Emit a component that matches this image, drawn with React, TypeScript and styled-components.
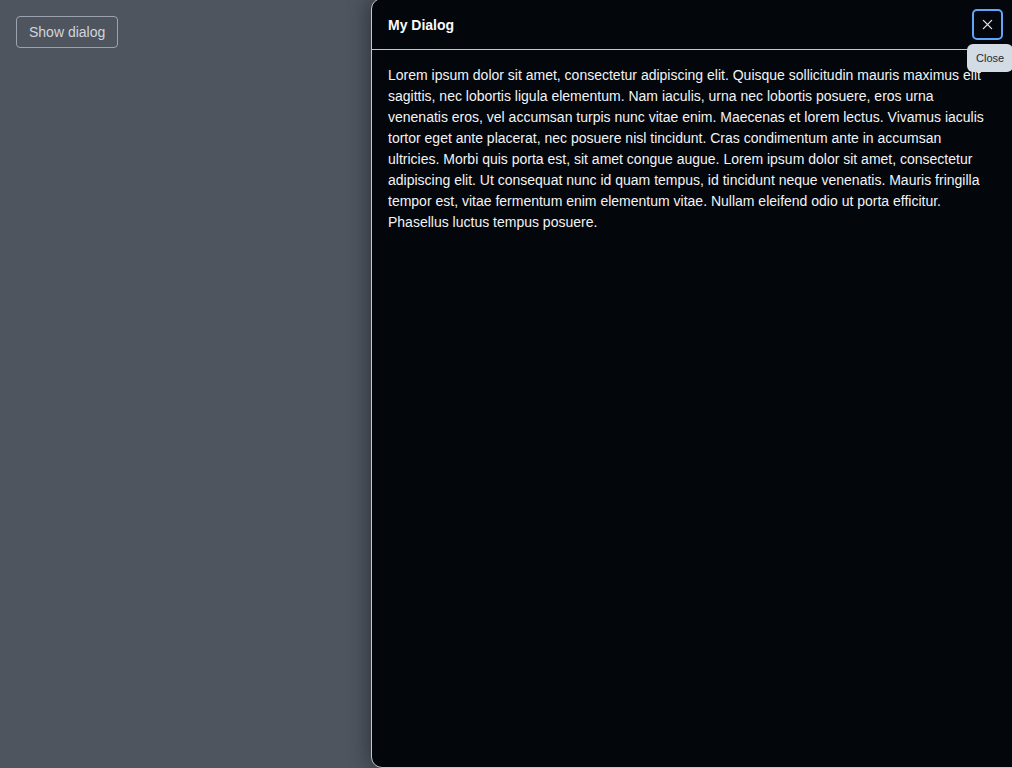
import React from "react";
import styled, { createGlobalStyle } from "styled-components";

const Global = createGlobalStyle`
  html, body { margin: 0; padding: 0; }
  body {
    background: #4e555f;
    font-family: "Liberation Sans", Arial, sans-serif;
    width: 1012px;
    height: 768px;
    overflow: hidden;
  }
`;

const Page = styled.div`
  position: relative;
  width: 1012px;
  height: 768px;
  padding: 16px;
  box-sizing: border-box;
  overflow: hidden;
`;

const ShowButton = styled.button`
  font-family: "Liberation Sans", Arial, sans-serif;
  font-size: 14px;
  color: #d1d5db;
  background: transparent;
  border: 1px solid #9ca3af;
  border-radius: 4px;
  height: 32px;
  padding: 0 12px;
  cursor: pointer;
`;

const Dialog = styled.div`
  position: absolute;
  top: -2px;
  left: 371px;
  width: 660px;
  height: 770px;
  box-sizing: border-box;
  background: #03060b;
  border: 1px solid #c4c8ce;
  border-radius: 11px;
  box-shadow: -4px 0 20px rgba(0, 0, 0, 0.35);
  color: #f3f4f6;
  display: flex;
  flex-direction: column;
`;

const Header = styled.div`
  height: 51px;
  flex: none;
  display: flex;
  align-items: center;
  justify-content: space-between;
  padding: 1px 9px 0 16px;
  border-bottom: 1px solid #c4c8ce;
  width: 640px;
  box-sizing: border-box;
`;

const Title = styled.h2`
  margin: 0;
  font-size: 14px;
  font-weight: 700;
  color: #f9fafb;
`;

const CloseWrap = styled.div`
  position: relative;
  display: flex;
`;

const CloseButton = styled.button`
  width: 31px;
  height: 31px;
  box-sizing: border-box;
  display: flex;
  align-items: center;
  justify-content: center;
  background: transparent;
  border: 2px solid #60a5fa;
  border-radius: 5px;
  color: #e5e7eb;
  padding: 0;
`;

const Tooltip = styled.div`
  position: absolute;
  top: 35px;
  left: -5px;
  height: 28px;
  padding: 0 9px;
  display: flex;
  align-items: center;
  background: #d3dbe4;
  color: #1f2937;
  font-size: 11px;
  border-radius: 6px;
  white-space: nowrap;
`;

const Body = styled.div`
  padding: 15px 16px 16px;
  width: 640px;
  box-sizing: border-box;
`;

const Para = styled.p`
  margin: 0;
  font-size: 14px;
  line-height: 21px;
  color: #f3f4f6;
`;

export default function App() {
  return (
    <>
      <Global />
      <Page>
        <ShowButton>Show dialog</ShowButton>
        <Dialog>
          <Header>
            <Title>My Dialog</Title>
            <CloseWrap>
              <CloseButton aria-label="Close">
                <svg width="11" height="11" viewBox="0 0 12 12" fill="none">
                  <path d="M1.5 1.5 L10.5 10.5 M10.5 1.5 L1.5 10.5" stroke="#e5e7eb" strokeWidth="1.4" strokeLinecap="round" />
                </svg>
              </CloseButton>
              <Tooltip>Close</Tooltip>
            </CloseWrap>
          </Header>
          <Body>
            <Para>
              Lorem ipsum dolor sit amet, consectetur adipiscing elit. Quisque sollicitudin mauris maximus elit sagittis, nec lobortis ligula elementum. Nam iaculis, urna nec lobortis posuere, eros urna venenatis eros, vel accumsan turpis nunc vitae enim. Maecenas et lorem lectus. Vivamus iaculis tortor eget ante placerat, nec posuere nisl tincidunt. Cras condimentum ante in accumsan ultricies. Morbi quis porta est, sit amet congue augue. Lorem ipsum dolor sit amet, consectetur adipiscing elit. Ut consequat nunc id quam tempus, id tincidunt neque venenatis. Mauris fringilla tempor est, vitae fermentum enim elementum vitae. Nullam eleifend odio ut porta efficitur. Phasellus luctus tempus posuere.
            </Para>
          </Body>
        </Dialog>
      </Page>
    </>
  );
}
